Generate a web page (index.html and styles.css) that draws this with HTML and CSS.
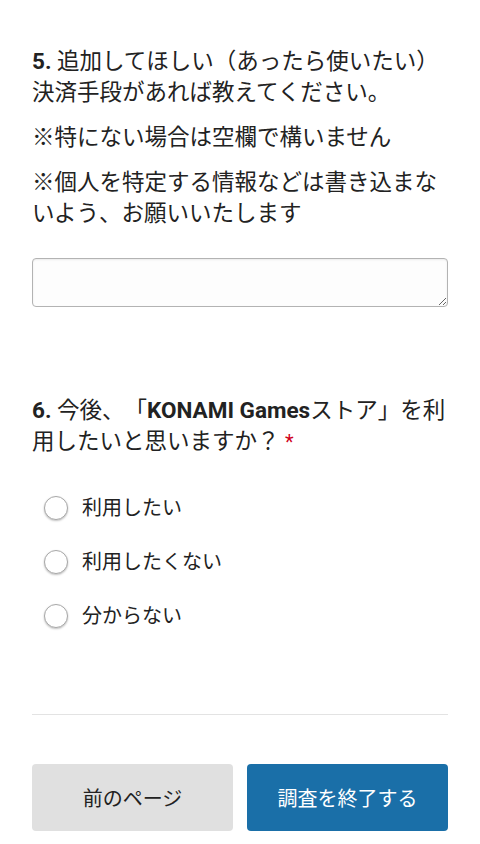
FILE: index.html
```html
<!DOCTYPE html>
<html lang="ja">
<head>
  <meta charset="UTF-8" />
  <meta name="viewport" content="width=device-width, initial-scale=1" />
  <title>アンケート</title>
  <link rel="stylesheet" href="styles.css">
</head>
<body>

  <form class="survey" onsubmit="return false">

    <!-- Question 5 -->
    <div class="question q-text">
      <div class="q-title"><span class="q-num">5.</span> 追加してほしい（あったら使いたい）決済手段があれば教えてください。</div>
      <p class="q-note">※特にない場合は空欄で構いません</p>
      <p class="q-note">※個人を特定する情報などは書き込まないよう、お願いいたします</p>
      <textarea class="answer" rows="1" aria-label="回答"></textarea>
    </div>

    <!-- Question 6 -->
    <div class="question q-choice">
      <div class="q-title"><span class="q-num">6.</span> 今後、「<b class="brand">KONAMI Games</b>ストア」を利用したいと思いますか？ <span class="required">*</span></div>
      <div class="options" role="radiogroup">
        <label class="option"><input type="radio" name="q6" value="1" /><span class="radio"></span>利用したい</label>
        <label class="option"><input type="radio" name="q6" value="2" /><span class="radio"></span>利用したくない</label>
        <label class="option"><input type="radio" name="q6" value="3" /><span class="radio"></span>分からない</label>
      </div>
    </div>

    <hr class="divider" />

    <div class="nav-buttons">
      <button type="button" class="btn btn-prev">前のページ</button>
      <button type="submit" class="btn btn-finish">調査を終了する</button>
    </div>

  </form>

</body>
</html>
```

FILE: styles.css
```css
body {
  margin: 0;
  background: #fff;
  color: #222;
  font-family: Roboto, "Noto Sans CJK JP", "Noto Sans", sans-serif;
  text-spacing-trim: space-all;
}
.survey {
  padding: 46px 32px 0;
}
.q-title {
  font-size: 22.5px;
  line-height: 31px;
}
.q-num,
.brand {
  font-weight: 700;
}
.required {
  color: #d0021b;
  font-size: 20px;
}
.q-note {
  margin: 14px 0 0;
  font-size: 22.5px;
  line-height: 31px;
}
.answer {
  display: block;
  width: 100%;
  height: 49px;
  margin-top: 29px;
  box-sizing: border-box;
  border: 1px solid #b3b3b3;
  border-radius: 4px;
  background: #fdfdfd;
  box-shadow: inset 0 1px 2px rgba(0, 0, 0, 0.08);
  font-size: 18px;
  font-family: inherit;
  padding: 8px 10px;
}
.q-choice {
  margin-top: 88px;
}
.options {
  display: flex;
  flex-direction: column;
  gap: 28px;
  margin-top: 37px;
}
.option {
  display: flex;
  align-items: center;
  gap: 14px;
  padding-left: 12px;
  font-size: 20px;
  line-height: 26px;
  cursor: pointer;
}
.option input {
  display: none;
}
.radio {
  width: 22px;
  height: 22px;
  border: 1px solid #a8a8a8;
  border-radius: 50%;
  background: #fff;
  box-shadow: 0 1px 2px rgba(0, 0, 0, 0.25);
  flex-shrink: 0;
}
.option input:checked + .radio {
  border: 7px solid #1a6fa8;
  box-sizing: border-box;
}
.divider {
  border: none;
  border-top: 1px solid #e3e3e3;
  margin: 85px 0 0;
}
.nav-buttons {
  display: flex;
  gap: 14px;
  margin-top: 49px;
}
.btn {
  flex: 1;
  height: 67px;
  border: none;
  border-radius: 4px;
  font-family: inherit;
  font-size: 20px;
  cursor: pointer;
}
.btn-prev {
  background: #e0e0e0;
  color: #222;
}
.btn-finish {
  background: #1a6fa8;
  color: #fff;
}
```
